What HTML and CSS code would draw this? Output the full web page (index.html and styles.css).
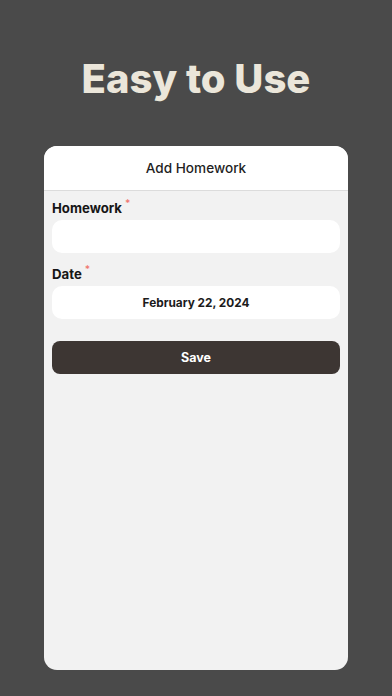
FILE: index.html
```html
<!DOCTYPE html>
<html>
<head>
<meta charset="utf-8">
<link rel="stylesheet" href="styles.css">
</head>
<body>
<div class="screen">
  <h1 class="headline">Easy to Use</h1>
  <div class="card">
    <div class="card-header">Add Homework</div>
    <div class="card-body">
      <div class="field">
        <div class="label">Homework<span class="req">*</span></div>
        <div class="input"></div>
      </div>
      <div class="field">
        <div class="label">Date<span class="req">*</span></div>
        <div class="input date">February 22, 2024</div>
      </div>
      <div class="button">Save</div>
    </div>
  </div>
</div>
</body>
</html>
```
FILE: styles.css
```css
html, body {
  margin: 0;
  padding: 0;
  background: #4a4a4a;
}
body {
  font-family: Inter, "Noto Sans", "Liberation Sans", sans-serif;
  width: 392px;
  height: 696px;
  overflow: hidden;
}
.screen {
  display: flex;
  flex-direction: column;
  align-items: center;
  padding-top: 55px;
}
.headline {
  margin: 0;
  font-size: 40px;
  line-height: 48px;
  font-weight: 800;
  color: #ebe6da;
  letter-spacing: 0;
}
.card {
  margin-top: 43px;
  width: 304px;
  height: 524px;
  background: #f2f2f2;
  border-radius: 13px;
  overflow: hidden;
  display: flex;
  flex-direction: column;
}
.card-header {
  height: 44px;
  background: #ffffff;
  border-bottom: 1px solid #dcdcdc;
  display: flex;
  align-items: center;
  justify-content: center;
  font-size: 13.6px;
  font-weight: 500;
  color: #1f1f1f;
}
.card-body {
  padding: 8px 8px 0 8px;
  display: flex;
  flex-direction: column;
}
.field {
  display: flex;
  flex-direction: column;
}
.field + .field {
  margin-top: 12px;
}
.label {
  font-size: 13.2px;
  font-weight: 700;
  color: #161616;
  line-height: 18px;
  height: 21px;
}
.req {
  color: #f07a72;
  font-size: 10px;
  font-weight: 600;
  vertical-align: top;
  margin-left: 3px;
  position: relative;
  top: -5px;
}
.input {
  height: 33px;
  background: #ffffff;
  border-radius: 10px;
}
.date {
  display: flex;
  align-items: center;
  justify-content: center;
  font-size: 11.8px;
  font-weight: 700;
  color: #1b1b1b;
}
.button {
  margin-top: 22px;
  height: 33px;
  background: #3d3633;
  border-radius: 8px;
  display: flex;
  align-items: center;
  justify-content: center;
  color: #ffffff;
  font-size: 12.5px;
  font-weight: 700;
}
```
